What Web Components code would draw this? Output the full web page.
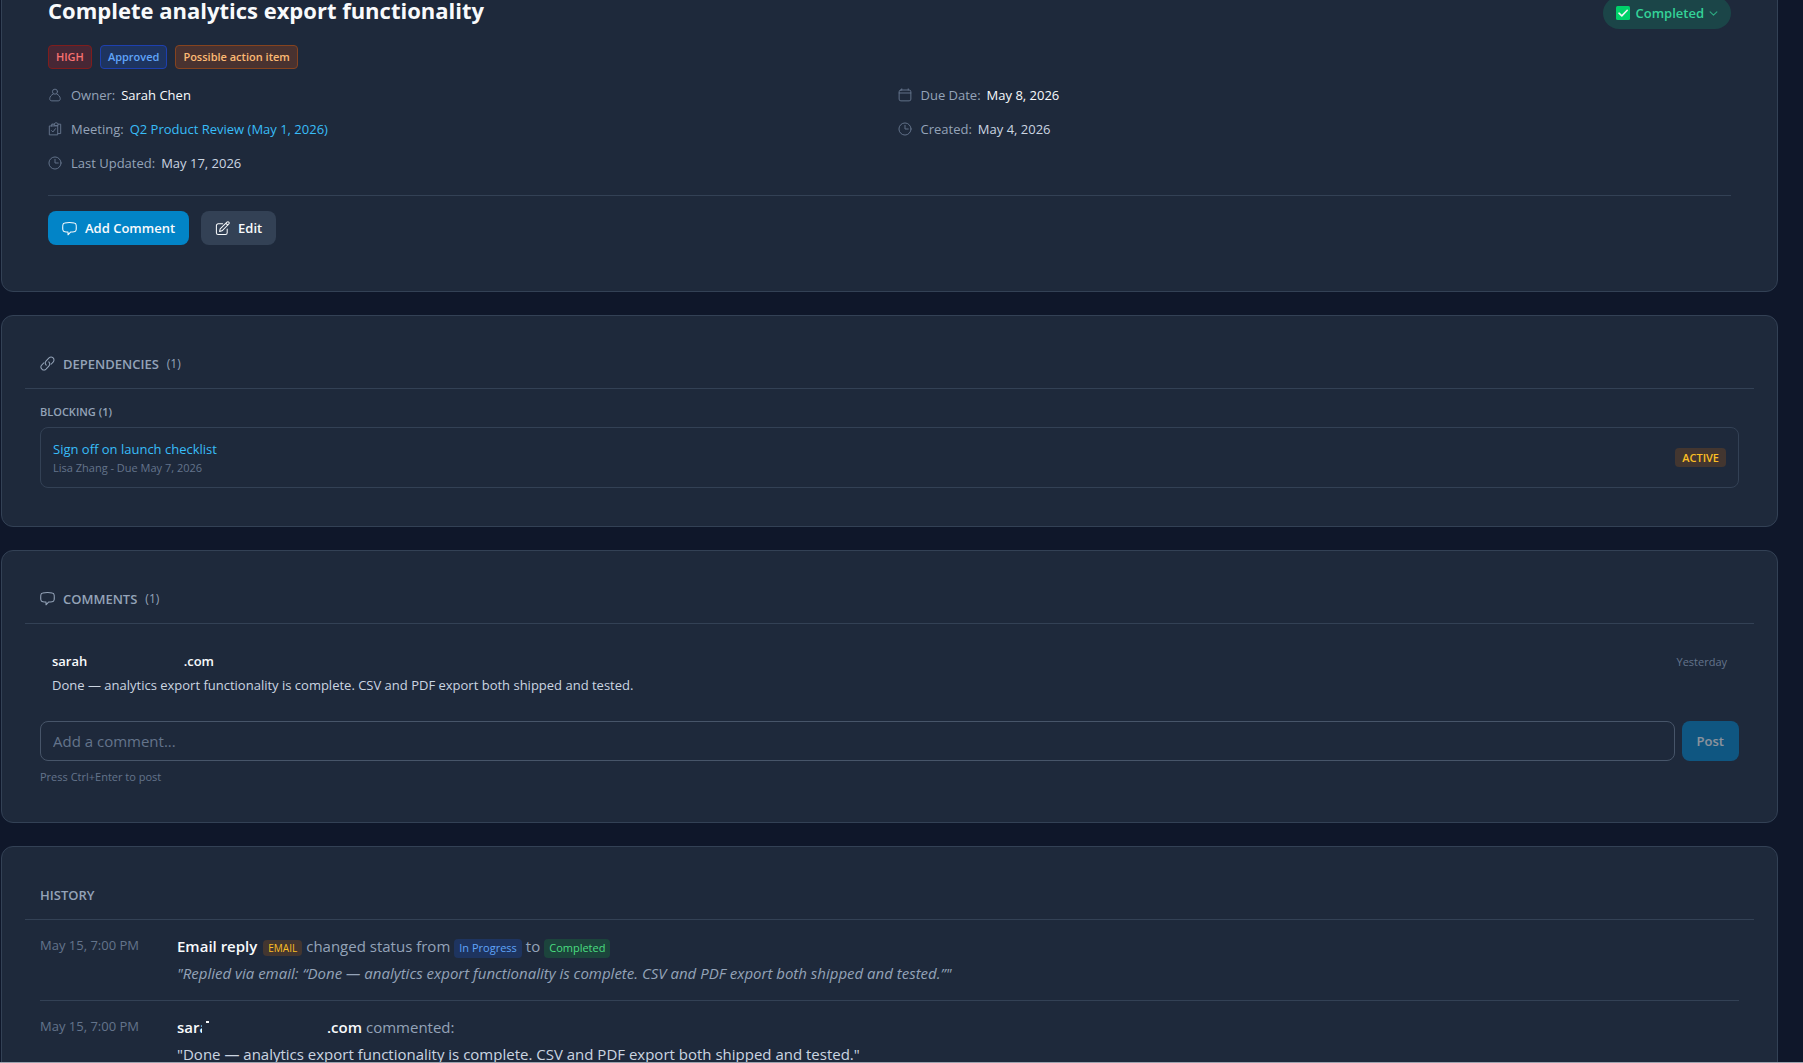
<!DOCTYPE html>
<html lang="en">
<head>
<meta charset="utf-8">
<meta name="viewport" content="width=device-width, initial-scale=1">
<title>Complete analytics export functionality</title>
<style>
  :root {
    --bg: #0f172a;
    --surface: #1e293b;
    --line: #334155;
    --line-strong: #475569;
    --white: #f8fafc;
    --text: #cbd5e1;
    --muted: #94a3b8;
    --faint: #64748b;
    --link: #38bdf8;
    --primary: #0284c7;
    --fs-xs: 10px;
    --fs-sm: 11px;
    --fs-base: 13px;
    --fs-md: 15px;
    --fs-lg: 22px;
  }

  * { box-sizing: border-box; }

  body {
    margin: 0;
    height: 100vh;
    overflow: hidden;
    background: var(--bg);
    border-bottom: 1px solid #9ca3af;
    color: var(--text);
    font-family: "Open Sans", "Noto Sans", sans-serif;
    font-size: var(--fs-base);
  }

  /* The page is scrolled down a little way into the first card */
  main {
    display: flex;
    flex-direction: column;
    gap: 23px;
    margin: -50px 25px 0 1px;
  }

  a { color: var(--link); text-decoration: none; }
</style>
</head>
<body>
<main>
  <app-card>
    <item-summary heading="Complete analytics export functionality">
      <status-button slot="status">Completed</status-button>
      <tag-badge slot="tags" tone="red">HIGH</tag-badge>
      <tag-badge slot="tags" tone="blue">Approved</tag-badge>
      <tag-badge slot="tags" tone="orange">Possible action item</tag-badge>
      <meta-row icon="user" label="Owner" strong>Sarah Chen</meta-row>
      <meta-row icon="calendar" label="Due Date" strong>May 8, 2026</meta-row>
      <meta-row icon="clipboard" label="Meeting"><a href="#meeting">Q2 Product Review (May 1, 2026)</a></meta-row>
      <meta-row icon="clock" label="Created">May 4, 2026</meta-row>
      <meta-row icon="clock" label="Last Updated">May 17, 2026</meta-row>
      <app-button slot="actions" icon="comment" kind="primary">Add Comment</app-button>
      <app-button slot="actions" icon="edit">Edit</app-button>
    </item-summary>
  </app-card>

  <app-card>
    <card-section icon="link" heading="Dependencies" count="(1)">
      <dependency-list heading="Blocking (1)">
        <dependency-item href="#checklist" info="Lisa Zhang - Due May 7, 2026" state="ACTIVE">Sign off on launch checklist</dependency-item>
      </dependency-list>
    </card-section>
  </app-card>

  <app-card>
    <card-section icon="comment" heading="Comments" count="(1)">
      <comment-item date="Yesterday">
        <masked-email slot="author" start="sarah" end=".com"></masked-email>
        Done — analytics export functionality is complete. CSV and PDF export both shipped and tested.
      </comment-item>
      <comment-form></comment-form>
    </card-section>
  </app-card>

  <app-card>
    <card-section heading="History" flush>
      <history-entry date="May 15, 7:00 PM" quoted>
        <b slot="who">Email reply</b>
        <tag-badge slot="what" tone="amber" size="tiny">EMAIL</tag-badge>
        <span slot="what">changed status from</span>
        <tag-badge slot="what" tone="blue" size="small">In Progress</tag-badge>
        <span slot="what">to</span>
        <tag-badge slot="what" tone="green" size="small">Completed</tag-badge>
        "Replied via email: “Done — analytics export functionality is complete. CSV and PDF export both shipped and tested.”"
      </history-entry>
      <history-entry date="May 15, 7:00 PM">
        <masked-email slot="who" start="sara" end=".com" size="large"></masked-email>
        <span slot="what">commented:</span>
        "Done — analytics export functionality is complete. CSV and PDF export both shipped and tested."
      </history-entry>
    </card-section>
  </app-card>
</main>

<script>
const ICONS = {
  user: '<circle cx="8" cy="4.2" r="2.9"/><path d="M5.9 6.9C3.7 7.8 2 10 2 12.3c0 1.5.9 2.4 2.4 2.4h7.2c1.5 0 2.4-.9 2.4-2.4 0-2.3-1.7-4.5-3.9-5.4"/>',
  calendar: '<rect x="1.3" y="2.3" width="13.4" height="12.4" rx="2"/><path d="M1.3 5.7h13.4M4.3 1v1.3M11.7 1v1.3"/>',
  clipboard: '<path d="M5.5 2.5H4.2v2M4.2 4.5H1.5v10.2h9.6v-1.5M5.5 2.5h1.3M11.5 2.5h3v10.7h-3.4V4.5H4.2M7.2 3.6V2.2l1-1.200h2.300l1 1.200v1.400z"/><path d="m4 9.800 1.600 1.600 3-3.800"/>',
  clock: '<circle cx="8" cy="8" r="6.9"/><path d="M8 3.800V8h3.700"/>',
  comment: '<path d="M3 2.100C6 1.500 10 1.500 13 2.100c1.300.2 2 1 2.100 2.100.2 1.800.2 3.600 0 5.200-.1 1.200-.9 1.900-2.100 2.100-1.300.2-2.500.3-3.900.3L6.400 14.700v-2.900c-1.200 0-2.300-.1-3.400-.3C1.800 11.300 1 10.600.9 9.400c-.2-1.600-.2-3.400 0-5.200C1 3.100 1.800 2.300 3 2.100z"/>',
  edit: '<path d="M8.200 3H3.400A1.900 1.900 0 0 0 1.500 4.900v7.700c0 1 .9 1.900 1.900 1.900h7.700c1 0 1.900-.9 1.900-1.900V8.600"/><path d="M4.900 11.200l.6-2.700 7.300-7.200a1.300 1.300 0 0 1 1.900 1.900l-7.200 7.300zM11.700 2.500l1.900 1.900"/>',
  link: '<path d="M6.600 9.700a3.200 3.200 0 0 1 0-4.400l3-3.200a3.100 3.100 0 0 1 4.400 4.400L11.800 8.800"/><path d="M9.400 6.300a3.200 3.200 0 0 1 0 4.400l-3 3.200A3.100 3.100 0 0 1 2 9.500L4.200 7.200"/>',
  chevron: '<path d="m2 5 6 6 6-6"/>'
};

class BaseElement extends HTMLElement {
  connectedCallback() {
    if (this.shadowRoot) return;
    this.attachShadow({ mode: 'open' });
    this.shadowRoot.innerHTML = `<style>*{box-sizing:border-box}</style>` + this.template();
  }

  attr(name) {
    return this.getAttribute(name) || '';
  }
}

class AppIcon extends BaseElement {
  template() {
    return `
      <style>
        :host { display: inline-flex; flex: none; width: 14px; height: 14px; }
        svg { width: 100%; height: 100%; fill: none; stroke: currentColor; stroke-width: 1.1; stroke-linecap: round; stroke-linejoin: round; }
        :host([name="chevron"]) svg { stroke-width: 2; }
      </style>
      <svg viewBox="0 0 16 16" aria-hidden="true">${ICONS[this.attr('name')]}</svg>
    `;
  }
}

class AppCard extends BaseElement {
  template() {
    return `
      <style>
        :host {
          display: block;
          box-sizing: border-box;
          padding: 23px;
          background: var(--surface);
          border: 1px solid var(--line);
          border-radius: 12px;
        }
      </style>
      <slot></slot>
    `;
  }
}

class TagBadge extends BaseElement {
  template() {
    return `
      <style>
        :host {
          display: inline-flex;
          align-items: center;
          box-sizing: border-box;
          height: 24px;
          padding: 0 7px;
          border: 1px solid transparent;
          border-radius: 4px;
          font-size: var(--fs-sm);
          font-weight: 600;
          line-height: 14px;
          white-space: nowrap;
        }
        :host([tone="red"]) { color: #f87171; background: #472735; border-color: #7f1d1d; }
        :host([tone="blue"]) { color: #60a5fa; background: #1e345f; border-color: #1e40af; }
        :host([tone="orange"]) { color: #fdba74; background: #493230; border-color: #85431f; }
        :host([tone="amber"]) { color: #fbbf24; background: #433630; }
        :host([tone="green"]) { color: #4ade80; background: #1c443c; }
        :host([size]) { height: 19px; padding: 0 5px; border: none; font-weight: 400; }
        :host([size="tiny"]) { height: 16px; font-size: var(--fs-xs); }
        :host([size="state"]) { padding: 0 7px; font-weight: 600; }
      </style>
      <slot></slot>
    `;
  }
}

class StatusButton extends BaseElement {
  template() {
    return `
      <style>
        :host { display: block; }
        button {
          display: flex;
          align-items: center;
          gap: 5px;
          height: 32px;
          padding: 0 13px;
          border: none;
          border-radius: 16px;
          background: #1b4548;
          color: #34d399;
          font-family: inherit;
          font-size: var(--fs-base);
          font-weight: 600;
          cursor: pointer;
        }
        .check { width: 14px; height: 14px; }
        app-icon { width: 9px; height: 9px; opacity: .7; }
      </style>
      <button type="button" aria-haspopup="listbox">
        <svg class="check" viewBox="0 0 14 14" aria-hidden="true">
          <rect width="14" height="14" rx="1.5" fill="#00d26a"/>
          <path d="m3 7.2 2.8 2.7L11.2 4.3" fill="none" stroke="#f4f4f4" stroke-width="1.6" stroke-linecap="round" stroke-linejoin="round"/>
        </svg>
        <slot></slot>
        <app-icon name="chevron"></app-icon>
      </button>
    `;
  }
}

class MetaRow extends BaseElement {
  template() {
    return `
      <style>
        :host { display: flex; align-items: center; gap: 9px; height: 22px; }
        app-icon { color: var(--faint); }
        dl { display: flex; gap: 6px; margin: 0; line-height: 18px; }
        dt { color: var(--muted); }
        dd { margin: 0; }
        :host([strong]) dd { color: var(--white); font-weight: 500; }
      </style>
      <app-icon name="${this.attr('icon')}"></app-icon>
      <dl><dt>${this.attr('label')}:</dt><dd><slot></slot></dd></dl>
    `;
  }
}

class AppButton extends BaseElement {
  template() {
    return `
      <style>
        :host { display: flex; }
        button {
          display: flex;
          align-items: center;
          gap: 8px;
          height: 34px;
          padding: 0 14px;
          border: none;
          border-radius: 8px;
          background: var(--line);
          color: var(--white);
          font-family: inherit;
          font-size: var(--fs-base);
          font-weight: 600;
          cursor: pointer;
        }
        app-icon { width: 15px; height: 15px; }
        :host([kind="primary"]) button { background: var(--primary); }
      </style>
      <button type="button"><app-icon name="${this.attr('icon')}"></app-icon><slot></slot></button>
    `;
  }
}

class ItemSummary extends BaseElement {
  template() {
    return `
      <style>
        :host { display: block; padding: 23px; }
        header { display: flex; align-items: flex-start; justify-content: space-between; }
        h1 { margin: 0; color: var(--white); font-size: var(--fs-lg); font-weight: 700; line-height: 26px; }
        .tags { display: flex; gap: 8px; margin: 16px 0 15px; }
        .meta { display: grid; grid-template-columns: 1fr 1fr; gap: 12px 16px; padding-bottom: 21px; border-bottom: 1px solid var(--line); }
        .actions { display: flex; gap: 12px; padding-top: 15px; }
      </style>
      <header><h1>${this.attr('heading')}</h1><slot name="status"></slot></header>
      <div class="tags"><slot name="tags"></slot></div>
      <div class="meta"><slot></slot></div>
      <div class="actions"><slot name="actions"></slot></div>
    `;
  }
}

class CardSection extends BaseElement {
  template() {
    const icon = this.attr('icon') ? `<app-icon name="${this.attr('icon')}"></app-icon>` : '';
    return `
      <style>
        :host { display: block; }
        header {
          display: flex;
          align-items: center;
          gap: 8px;
          height: 50px;
          padding: 0 15px;
          border-bottom: 1px solid var(--line);
          color: var(--muted);
        }
        app-icon { width: 15px; height: 15px; }
        h2 { margin: 0; font-size: var(--fs-base); font-weight: 600; text-transform: uppercase; }
        .count { font-size: 12px; }
        .body { padding: 16px 15px 15px; }
        :host([flush]) .body { padding-top: 0; }
      </style>
      <header>${icon}<h2>${this.attr('heading')}</h2><span class="count">${this.attr('count')}</span></header>
      <div class="body"><slot></slot></div>
    `;
  }
}

class DependencyList extends BaseElement {
  template() {
    return `
      <style>
        :host { display: block; }
        h3 { margin: 0 0 8px; color: var(--muted); font-size: var(--fs-sm); font-weight: 600; line-height: 14px; text-transform: uppercase; }
      </style>
      <h3>${this.attr('heading')}</h3>
      <slot></slot>
    `;
  }
}

class DependencyItem extends BaseElement {
  template() {
    return `
      <style>
        :host {
          display: flex;
          align-items: center;
          justify-content: space-between;
          box-sizing: border-box;
          padding: 12px;
          border: 1px solid var(--line);
          border-radius: 8px;
        }
        div { display: flex; flex-direction: column; align-items: start; gap: 2px; }
        a { color: var(--link); line-height: 18px; text-decoration: none; }
        span { color: var(--faint); font-size: var(--fs-sm); line-height: 15px; }
      </style>
      <div><a href="${this.attr('href')}"><slot></slot></a><span>${this.attr('info')}</span></div>
      <tag-badge tone="amber" size="state">${this.attr('state')}</tag-badge>
    `;
  }
}

/* Address whose middle part is covered over */
class MaskedEmail extends BaseElement {
  template() {
    return `
      <style>
        :host { display: inline-flex; justify-content: space-between; width: 162px; color: var(--white); font-weight: 600; }
        :host([size="large"]) { position: relative; width: 185px; }
        i { display: none; }
        :host([size="large"]) i { display: block; position: absolute; left: 25px; top: 4px; width: 22px; height: 16px; background: var(--surface); }
        i::after { content: ""; position: absolute; left: 4px; top: 2px; width: 3px; height: 2px; background: var(--white); }
      </style>
      <span>${this.attr('start')}</span><i></i><span>${this.attr('end')}</span>
    `;
  }
}

class CommentItem extends BaseElement {
  template() {
    return `
      <style>
        :host { display: block; padding: 12px; margin-bottom: 14px; }
        header { display: flex; align-items: center; justify-content: space-between; height: 18px; margin-bottom: 6px; }
        time { color: var(--faint); font-size: var(--fs-sm); }
        p { margin: 0; line-height: 19px; }
      </style>
      <header><slot name="author"></slot><time>${this.attr('date')}</time></header>
      <p><slot></slot></p>
    `;
  }
}

class CommentForm extends BaseElement {
  template() {
    return `
      <style>
        :host { display: block; }
        form { display: flex; gap: 7px; margin-bottom: 9px; }
        input {
          flex: 1;
          min-width: 0;
          height: 40px;
          padding: 0 12px;
          border: 1px solid var(--line-strong);
          border-radius: 8px;
          background: transparent;
          color: var(--text);
          font-family: inherit;
          font-size: var(--fs-md);
        }
        input::placeholder { color: var(--faint); opacity: 1; }
        button {
          padding: 0 15px;
          border: none;
          border-radius: 8px;
          background: var(--primary);
          color: var(--white);
          font-family: inherit;
          font-size: var(--fs-base);
          font-weight: 600;
          opacity: .5;
        }
        small { display: block; color: var(--faint); font-size: var(--fs-sm); line-height: 14px; }
      </style>
      <form>
        <input type="text" aria-label="Add a comment" placeholder="Add a comment...">
        <button type="submit" disabled>Post</button>
      </form>
      <small>Press Ctrl+Enter to post</small>
    `;
  }
}

class HistoryEntry extends BaseElement {
  template() {
    return `
      <style>
        :host {
          display: grid;
          grid-template-columns: 120px 1fr;
          column-gap: 17px;
          padding: 14px 0 15px;
          border-bottom: 1px solid var(--line);
          font-size: var(--fs-md);
          line-height: 24px;
        }
        time { color: var(--faint); font-size: var(--fs-base); line-height: 22px; }
        .event { display: flex; align-items: baseline; gap: 4px; color: var(--muted); }
        ::slotted(b) { margin-right: 2px; color: var(--white); font-weight: 600; }
        p { margin: 3px 0 0; }
        :host([quoted]) p { color: var(--muted); font-style: italic; }
      </style>
      <time>${this.attr('date')}</time>
      <div>
        <div class="event"><slot name="who"></slot><slot name="what"></slot></div>
        <p><slot></slot></p>
      </div>
    `;
  }
}

customElements.define('app-icon', AppIcon);
customElements.define('app-card', AppCard);
customElements.define('tag-badge', TagBadge);
customElements.define('status-button', StatusButton);
customElements.define('meta-row', MetaRow);
customElements.define('app-button', AppButton);
customElements.define('item-summary', ItemSummary);
customElements.define('card-section', CardSection);
customElements.define('dependency-list', DependencyList);
customElements.define('dependency-item', DependencyItem);
customElements.define('masked-email', MaskedEmail);
customElements.define('comment-item', CommentItem);
customElements.define('comment-form', CommentForm);
customElements.define('history-entry', HistoryEntry);
</script>
</body>
</html>
